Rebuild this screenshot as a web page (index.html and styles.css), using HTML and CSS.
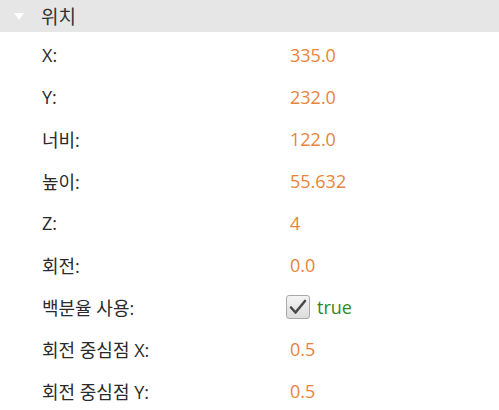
FILE: index.html
```html
<!DOCTYPE html>
<html lang="ko">
<head>
    <meta charset="UTF-8">
    <title>위치</title>
    <link rel="stylesheet" href="styles.css">
</head>
<body>
    <div class="section-header">
        <span class="arrow"></span>
        <span class="section-title">위치</span>
    </div>

    <div class="props">
        <div class="row"><span class="label">X:</span><span class="value">335.0</span></div>
        <div class="row"><span class="label">Y:</span><span class="value">232.0</span></div>
        <div class="row"><span class="label">너비:</span><span class="value">122.0</span></div>
        <div class="row"><span class="label">높이:</span><span class="value">55.632</span></div>
        <div class="row"><span class="label">Z:</span><span class="value">4</span></div>
        <div class="row"><span class="label">회전:</span><span class="value">0.0</span></div>
        <div class="row">
            <span class="label">백분율 사용:</span>
            <span class="value check-value">
                <span class="checkbox">
                    <svg width="18" height="16" viewBox="0 0 18 16">
                        <path d="M2 8.5 L6.5 13.5 L16 2" fill="none" stroke="#4a4a4a" stroke-width="2.6" stroke-linecap="round" stroke-linejoin="round"/>
                    </svg>
                </span>
                <span class="bool">true</span>
            </span>
        </div>
        <div class="row"><span class="label">회전 중심점 X:</span><span class="value">0.5</span></div>
        <div class="row"><span class="label">회전 중심점 Y:</span><span class="value">0.5</span></div>
    </div>
</body>
</html>
```

FILE: styles.css
```css
body {
    margin: 0;
    background: #ffffff;
    font-family: "Open Sans", "Noto Sans CJK KR", sans-serif;
    font-size: 18px;
    color: #2a2a2a;
}

.section-header {
    display: flex;
    align-items: center;
    height: 32px;
    background-color: #e6e6e6;
}

.arrow {
    width: 0;
    height: 0;
    margin-left: 14px;
    margin-right: 17px;
    border-left: 5.5px solid transparent;
    border-right: 5.5px solid transparent;
    border-top: 7px solid #ffffff;
}

.section-title {
    font-size: 19px;
    color: #333333;
}

.props {
    padding-top: 2px;
}

.row {
    display: flex;
    align-items: center;
    height: 42px;
}

.label {
    width: 248px;
    padding-left: 42px;
}

.value {
    color: #e8843c;
}

.check-value {
    display: flex;
    align-items: center;
    margin-left: -4px;
}

.checkbox {
    display: flex;
    align-items: center;
    justify-content: center;
    width: 22px;
    height: 22px;
    border: 1px solid #a9a9a9;
    border-radius: 3px;
    background: linear-gradient(#f4f4f4, #dcdcdc);
}

.bool {
    margin-left: 7px;
    color: #2f8a1f;
}
```
